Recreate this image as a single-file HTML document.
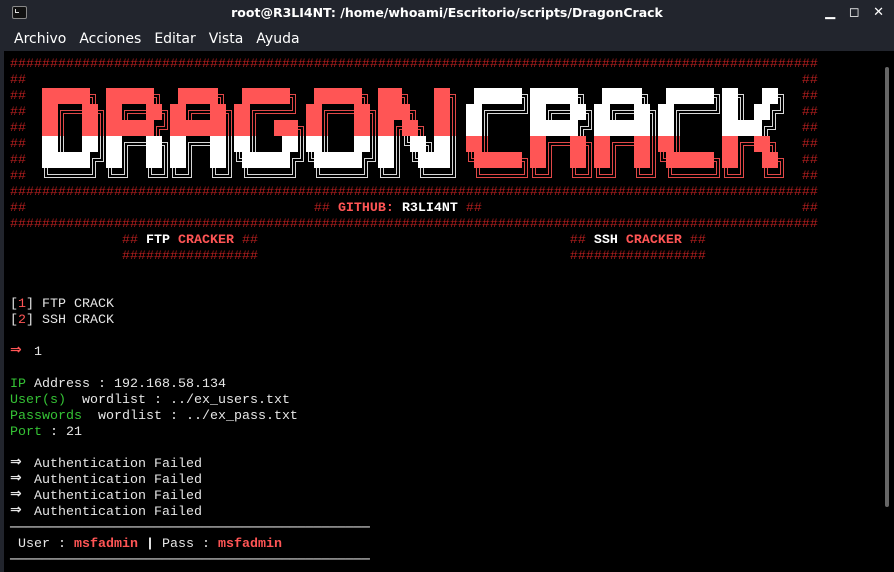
<!DOCTYPE html>
<html><head><meta charset="utf-8"><style>
html,body{margin:0;padding:0;width:894px;height:572px;overflow:hidden;background:#22252d;}
#title{position:absolute;left:0;top:0;width:894px;height:25px;background:#22252d;color:#fff;font:bold 12.5px "DejaVu Sans","Liberation Sans",sans-serif;text-align:center;line-height:26px;}
#icon{position:absolute;left:12px;top:6px;width:13px;height:11px;border:1px solid #888;border-radius:2px;background:#111;}
#icon:after{content:"";position:absolute;left:2px;top:2px;width:3px;height:3px;border-left:1px solid #ddd;border-bottom:1px solid #ddd;}
#ctl{position:absolute;right:10px;top:0;color:#fff;font:bold 13px "DejaVu Sans",sans-serif;line-height:26px;}
#menu{position:absolute;left:0;top:25px;height:26px;width:894px;color:#fff;font:14px "DejaVu Sans","Liberation Sans",sans-serif;line-height:28px;}
#menu span{margin-left:14px;margin-right:-1px}
#term{position:absolute;left:4px;top:51px;width:890px;height:521px;background:#000;}
#sb{position:absolute;left:881px;top:16px;width:4px;height:440px;background:#666;border-radius:2px;}
pre{position:absolute;left:10px;top:57px;margin:0;font:13.33px "Liberation Mono","DejaVu Sans Mono",monospace;line-height:16px;color:#e6e6e6;white-space:pre;}
.h{color:#b01e1e}.r{color:#ff5555}.w{color:#fff}.g{color:#35c235}.b{font-weight:bold}
.ar{display:inline-block;width:16px;height:16px;line-height:16px;vertical-align:top;font:bold 14px "DejaVu Sans",sans-serif;text-align:left;position:relative;top:-3px}
#logo{position:absolute;left:0;top:0;}
#logo div{position:absolute;}
</style></head><body>
<div id="title"><div id="icon"></div>root@R3LI4NT: /home/whoami/Escritorio/scripts/DragonCrack<div id="ctl">▁&nbsp;&nbsp;&nbsp;◻&nbsp;&nbsp;&nbsp;✕</div></div>
<div id="menu"><span>Archivo</span><span>Acciones</span><span>Editar</span><span>Vista</span><span>Ayuda</span></div>
<div id="term"><div id="sb"></div></div>
<pre><span class="h">#####################################################################################################
##                                                                                                 ##
##                                                                                                 ##
##                                                                                                 ##
##                                                                                                 ##
##                                                                                                 ##
##                                                                                                 ##
##                                                                                                 ##
#####################################################################################################
##                                    ## <b class="r">GITHUB:</b> <b class="w">R3LI4NT</b> ##                                        ##
#####################################################################################################</span>
              <span class="h">##</span> <b class="w">FTP</b> <b class="r">CRACKER</b> <span class="h">##</span>                                       <span class="h">##</span> <b class="w">SSH</b> <b class="r">CRACKER</b> <span class="h">##</span>
              <span class="h">#################</span>                                       <span class="h">#################</span>


[<span class="r">1</span>] FTP CRACK
[<span class="r">2</span>] SSH CRACK

<span class="ar r">⇒</span> 1

<span class="g">IP</span> Address : 192.168.58.134
<span class="g">User(s)</span>  wordlist : ../ex_users.txt
<span class="g">Passwords</span>  wordlist : ../ex_pass.txt
<span class="g">Port</span> : 21

<span class="ar">⇒</span> Authentication Failed
<span class="ar">⇒</span> Authentication Failed
<span class="ar">⇒</span> Authentication Failed
<span class="ar">⇒</span> Authentication Failed
<span class="w">─────────────────────────────────────────────</span>
 User : <b class="r">msfadmin</b> <b class="w">|</b> Pass : <b class="r">msfadmin</b>
<span class="w">─────────────────────────────────────────────</span></pre>
<div id="logo"></div>
<script>
var rows=[
"██████╗ ██████╗  █████╗  ██████╗  ██████╗ ███╗   ██╗  ██████╗██████╗  █████╗  ██████╗██╗  ██╗",
"██╔══██╗██╔══██╗██╔══██╗██╔════╝ ██╔═══██╗████╗  ██║ ██╔════╝██╔══██╗██╔══██╗██╔════╝██║ ██╔╝",
"██║  ██║██████╔╝███████║██║  ███╗██║   ██║██╔██╗ ██║ ██║     ██████╔╝███████║██║     █████╔╝ ",
"██║  ██║██╔══██╗██╔══██║██║   ██║██║   ██║██║╚██╗██║ ██║     ██╔══██╗██╔══██║██║     ██╔═██╗ ",
"██████╔╝██║  ██║██║  ██║╚██████╔╝╚██████╔╝██║ ╚████║ ╚██████╗██║  ██║██║  ██║╚██████╗██║  ██╗",
"╚═════╝ ╚═╝  ╚═╝╚═╝  ╚═╝ ╚═════╝  ╚═════╝ ╚═╝  ╚═══╝  ╚═════╝╚═╝  ╚═╝╚═╝  ╚═╝ ╚═════╝╚═╝  ╚═╝"];
var L=document.getElementById('logo'),h='';
function R(x,y,w,hh,c){h+='<div style="left:'+x+'px;top:'+y+'px;width:'+w+'px;height:'+hh+'px;background:'+c+'"></div>';}
for(var r=0;r<6;r++){var s=Array.from(rows[r]);
 for(var i=0;i<s.length;i++){
  var ch=s[i],x=42+i*8,y=88+r*16;
  var red=(i<52)?(r<3):(r>=3);
  var c=red?'#ff5555':'#ffffff',lc=red?'#e04848':'#d8d8d8';
  var a=x+2,b=x+5,p=y+6,q=y+9;
  if(ch=='█')R(x,y,8,16,c);
  else if(ch=='═'){R(x,p,8,1,lc);R(x,q,8,1,lc);}
  else if(ch=='║'){R(a,y,1,16,lc);R(b,y,1,16,lc);}
  else if(ch=='╗'){R(x,p,b-x+1,1,lc);R(b,p,1,y+16-p,lc);R(x,q,a-x+1,1,lc);R(a,q,1,y+16-q,lc);}
  else if(ch=='╔'){R(a,p,x+8-a,1,lc);R(a,p,1,y+16-p,lc);R(b,q,x+8-b,1,lc);R(b,q,1,y+16-q,lc);}
  else if(ch=='╝'){R(x,q,b-x+1,1,lc);R(b,y,1,q-y+1,lc);R(x,p,a-x+1,1,lc);R(a,y,1,p-y+1,lc);}
  else if(ch=='╚'){R(a,q,x+8-a,1,lc);R(a,y,1,q-y+1,lc);R(b,p,x+8-b,1,lc);R(b,y,1,p-y+1,lc);}
 }}
L.innerHTML=h;
</script>
</body></html>
